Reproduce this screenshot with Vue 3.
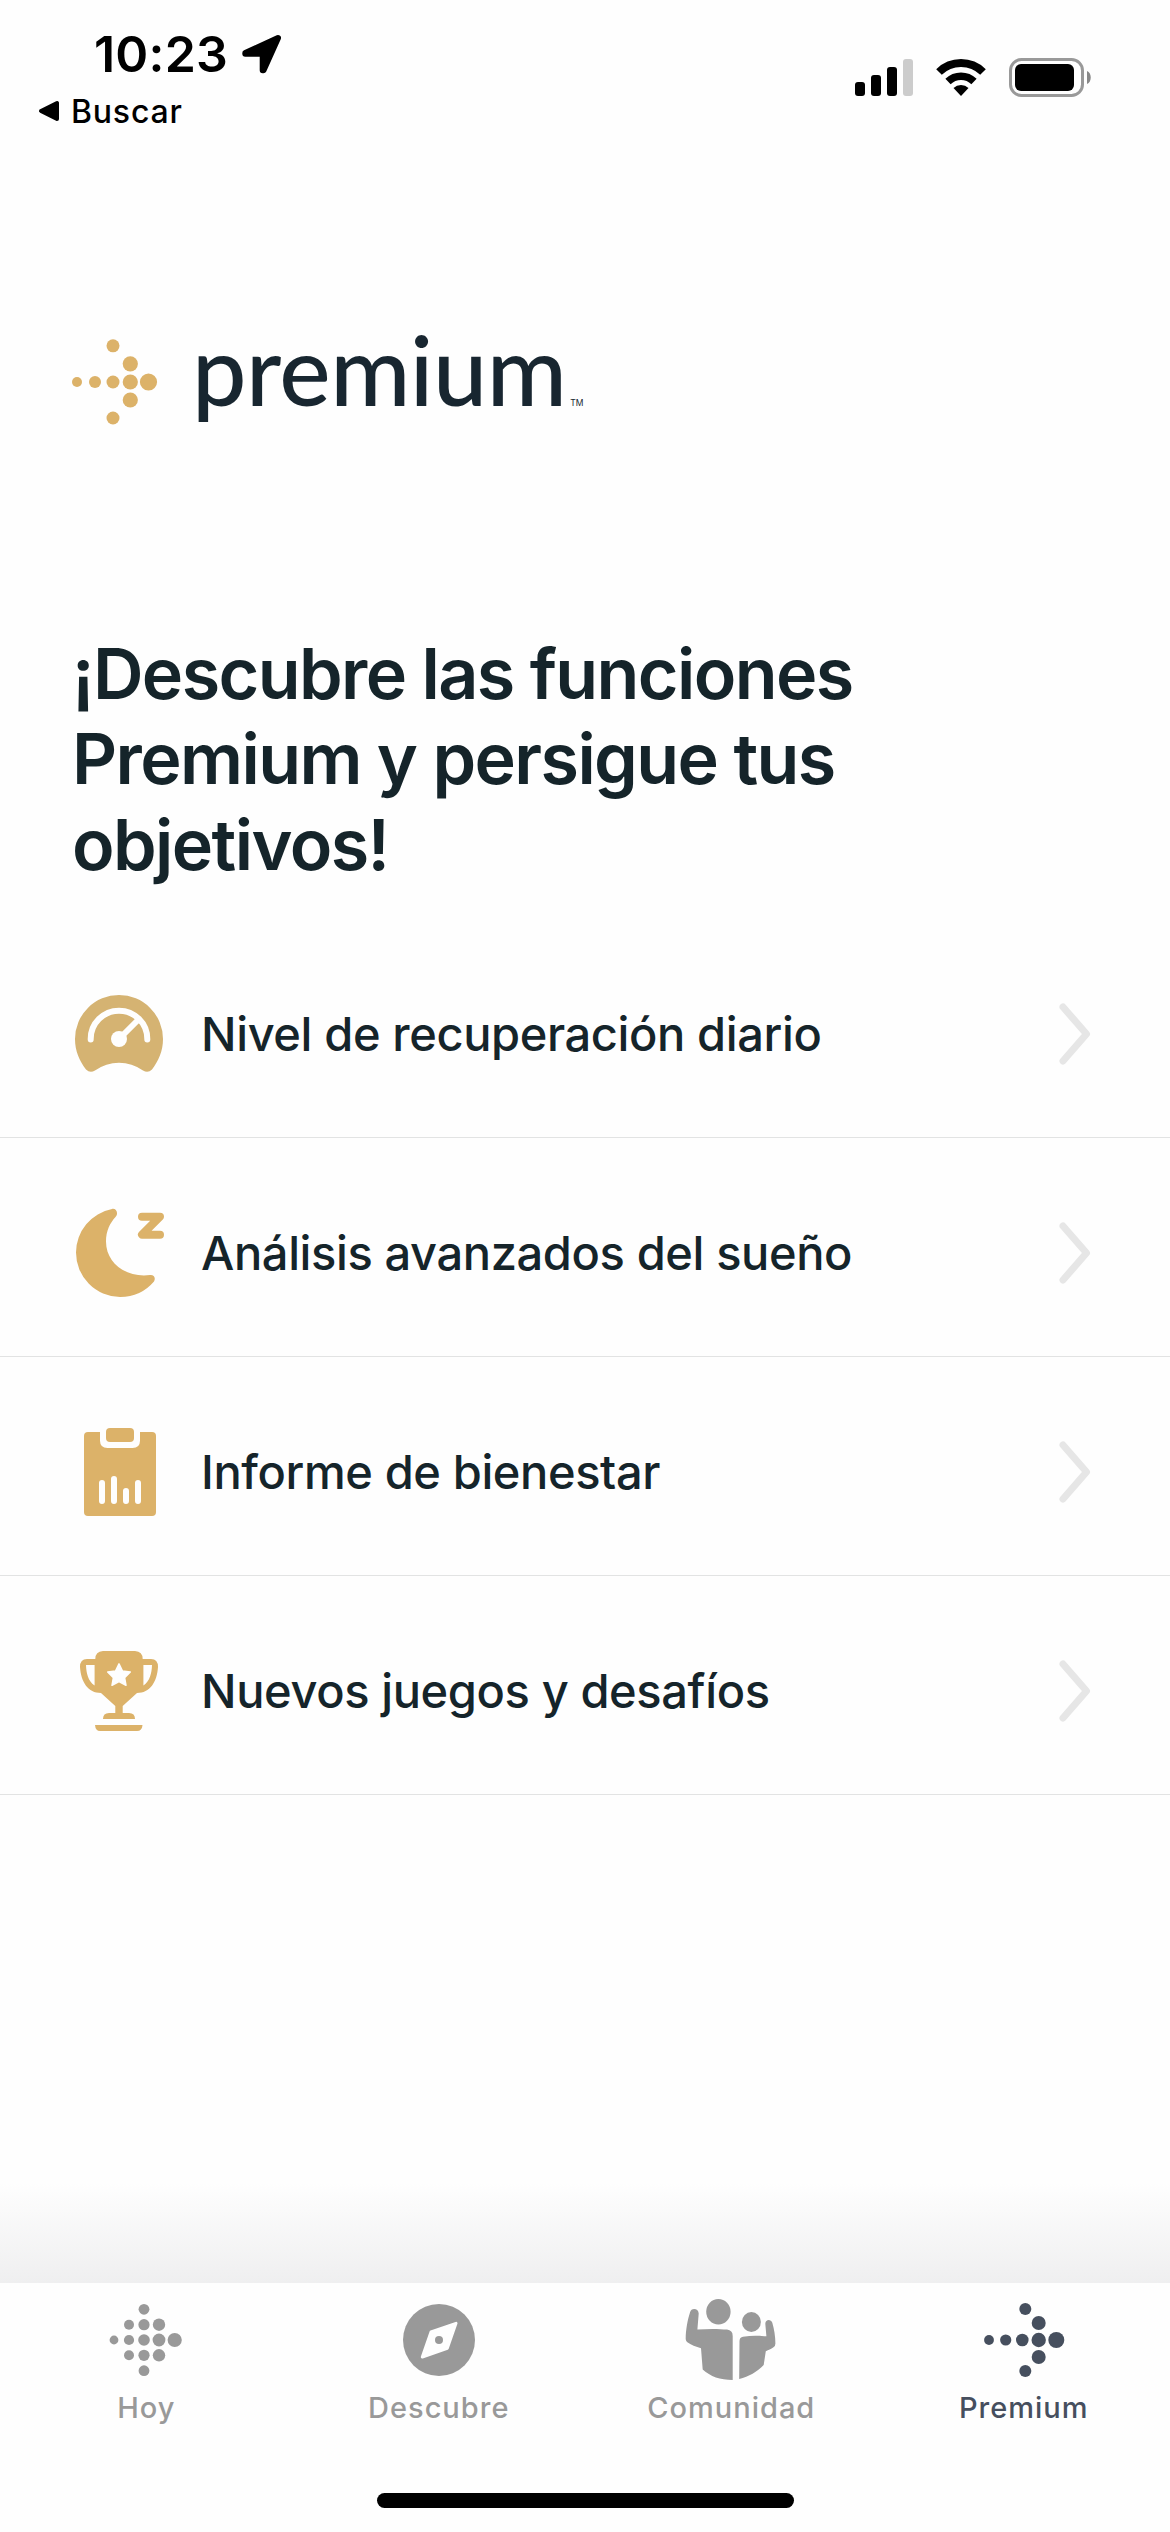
<script setup>
import { ref } from 'vue';

const activeTab = ref('premium');

const features = [
  { icon: 'gauge', label: 'Nivel de recuperación diario' },
  { icon: 'moon', label: 'Análisis avanzados del sueño' },
  { icon: 'report', label: 'Informe de bienestar' },
  { icon: 'trophy', label: 'Nuevos juegos y desafíos' },
];

const tabs = [
  { id: 'hoy', label: 'Hoy' },
  { id: 'descubre', label: 'Descubre' },
  { id: 'comunidad', label: 'Comunidad' },
  { id: 'premium', label: 'Premium' },
];

// [cx, cy, r]
const logoDots = [
  [7, 43, 5], [25, 43, 6], [43, 43, 6.5], [60.3, 43, 7.6], [78.5, 43, 8.6],
  [43, 6.8, 6.5], [60.3, 24.8, 7.6], [60.3, 61, 7.6], [43, 79, 6.5],
];

const todayDots = [
  [18, 50, 4.4],
  [33, 34.7, 5], [33, 50, 5.1], [33, 65.3, 5],
  [48, 19.3, 5.4], [48, 34.7, 5.6], [48, 50, 5.8], [48, 65.3, 5.6], [48, 80.7, 5.4],
  [63, 34.7, 6.2], [63, 50, 6.4], [63, 65.3, 6.2],
  [78.7, 50, 7.1],
];

const premiumDots = [
  [15, 50, 4.9], [31.7, 50, 5.6], [48.3, 50, 6.3], [64.7, 50, 7.2], [82.3, 50, 8],
  [51.3, 19, 6], [64.7, 33, 7], [64.7, 67, 7], [51.3, 81, 6],
];
</script>

<template>
  <div class="screen">
    <header class="status-bar">
      <div class="status-left">
        <div class="clock-row">
          <span class="clock">10:23</span>
          <svg class="location" viewBox="0 0 40 40">
            <path d="M37 4 L4.300 19 V19.700 H21.700 V36.300 H22.500 Z" fill="#000" stroke="#000" stroke-width="6" stroke-linejoin="round" />
          </svg>
        </div>
        <div class="back-row">
          <svg class="back-arrow" viewBox="0 0 22 22">
            <path d="M19 3 V19 L3 11 Z" fill="#000" stroke="#000" stroke-width="4" stroke-linejoin="round" />
          </svg>
          <span class="back-label">Buscar</span>
        </div>
      </div>
      <div class="status-right">
        <svg width="58" height="40" viewBox="0 0 58 40">
          <rect x="0" y="24" width="10" height="14" rx="3" />
          <rect x="16" y="17" width="10" height="21" rx="3" />
          <rect x="32" y="9" width="10" height="29" rx="3" />
          <rect x="48" y="1" width="10" height="37" rx="3" fill="#cccccc" />
        </svg>
        <svg width="52" height="40" viewBox="0 0 52 40">
          <path d="M4 14 A31.500 31.500 0 0 1 48 14" fill="none" stroke="#000" stroke-width="8" />
          <path d="M13 23.500 A18.500 18.500 0 0 1 39 23.500" fill="none" stroke="#000" stroke-width="7.500" />
          <path d="M18.500 30 A11 11 0 0 1 33.500 30 L26 38 Z" />
        </svg>
        <svg width="83" height="40" viewBox="0 0 83 40">
          <rect x="1.500" y="1.500" width="72" height="36" rx="11" fill="none" stroke="#999" stroke-width="3" />
          <rect x="6" y="6" width="59" height="27" rx="6" />
          <path d="M78 13 C83 15 83 24 78 26 Z" fill="#888" />
        </svg>
      </div>
    </header>

    <main class="content">
      <div class="brand">
        <svg class="brand-mark" viewBox="0 0 88 86">
          <circle v-for="(d, i) in logoDots" :key="i" :cx="d[0]" :cy="d[1]" :r="d[2]" />
        </svg>
        <span class="brand-name">premium</span>
        <span class="brand-tm">TM</span>
      </div>

      <h1 class="title">
        ¡Descubre las funciones<br />
        Premium y persigue tus<br />
        objetivos!
      </h1>

      <ul class="features">
        <li v-for="item in features" :key="item.label" class="feature">
          <svg class="feature-icon" :class="item.icon" viewBox="0 0 100 100">
            <g v-if="item.icon === 'gauge'">
              <path d="M5 55 A44 44 0 0 1 93 55 C93 67 88.500 77 82 85.500 Q78 89.500 73 86.500 Q62 78.700 49 78.700 Q36 78.700 25 86.500 Q20 89.500 16 85.500 C9.500 77 5 67 5 55 Z" />
              <path class="cut-line" d="M20.700 55.500 V55 A28.300 28.300 0 0 1 77.300 55 V55.500 M49 55 L68 36" />
              <circle class="cut" cx="49" cy="55" r="8" />
            </g>
            <g v-else-if="item.icon === 'moon'">
              <path d="M42 6 A44.500 44.500 0 0 0 6 49.500 A44.500 44.500 0 0 0 50 94 A44.500 44.500 0 0 0 84 78.500 C86 75 84 71.500 80 72 C56 75 36 60 36 38.500 C36 28 40 20 45.500 14 C49 10 46 5 42 6 Z" />
              <path class="zed" d="M72 13.700 H90 L72 31.700 H90" />
            </g>
            <g v-else-if="item.icon === 'report'">
              <rect x="14" y="10" width="72" height="84" rx="4" />
              <path class="cut" d="M30 8 H70 V18.500 Q70 26 62.500 26 H37.500 Q30 26 30 18.500 Z" />
              <rect x="36" y="6" width="28" height="14" rx="4" />
              <path class="cut-line" d="M32 61 V79 M44 57 V79 M56 69 V79 M68 61 V79" />
            </g>
            <g v-else>
              <path
                fill-rule="evenodd"
                d="M33 10 H65 Q72.700 10.500 72.700 18 H81 Q88 18 88 26 C87 41 80 52 67 52 L52.700 65 V72 H59 Q65 72 65 78 H33 Q33 72 39 72 H45.300 V65 L31 52 C18 52 11 41 10 26 Q10 18 17 18 H25.300 Q25.300 10.500 33 10 Z M16 24 C16.300 32 18 40 24.600 44.500 V24 Z M82 24 H73.400 V44.500 C80 40 81.700 32 82 24 Z"
              />
              <path d="M25 84 H72.500 Q72 90 67 90 H30 Q25.500 90 25 84 Z" />
              <path class="star" d="M49 22.800 L52.500 30 L60.300 31 L54.600 36.600 L56 44.300 L49 40.600 L42 44.300 L43.400 36.600 L37.700 31 L45.500 30 Z" />
            </g>
          </svg>
          <span class="feature-label">{{ item.label }}</span>
          <svg class="chevron" viewBox="0 0 34 64">
            <path d="M5 5 L28.500 32 L5 59" />
          </svg>
        </li>
      </ul>
    </main>

    <div class="fade"></div>

    <nav class="tab-bar">
      <button
        v-for="tab in tabs"
        :key="tab.id"
        class="tab"
        :class="{ active: activeTab === tab.id }"
        @click="activeTab = tab.id"
      >
        <svg class="tab-icon" viewBox="0 0 100 100">
          <g v-if="tab.id === 'hoy'">
            <circle v-for="(d, i) in todayDots" :key="i" :cx="d[0]" :cy="d[1]" :r="d[2]" />
          </g>
          <g v-else-if="tab.id === 'descubre'">
            <circle cx="50" cy="50" r="36" />
            <path class="needle" d="M67 33.300 L58.300 58.300 L33.300 67 L42 42 Z" />
            <circle cx="50" cy="50" r="4" />
          </g>
          <g v-else-if="tab.id === 'comunidad'">
            <ellipse cx="37.400" cy="21.700" rx="12.200" ry="12.700" />
            <ellipse cx="70.400" cy="32" rx="9.500" ry="10" />
            <path d="M9 22.500 C10 17.500 17.500 18 17.700 23.500 L16.400 39.500 C27 38.700 38 38.700 46 39.600 Q51.700 40.300 51.700 46 V90 C39 90 29.500 86.500 21.700 79.500 L20 58.300 C15 56.800 10 55 6 52 Q4.700 50.500 4.700 49 C4.700 40 6.500 30 9 22.500 Z" />
            <path d="M58.200 89 L58.500 51 Q58.700 47.400 62 46.800 C70 45.500 77 45.700 85.400 46.300 L84.300 33.800 C84.500 29 90 29 91.300 32.800 C93.200 39 94.400 47 94.400 53.500 Q94.400 56 92.500 57.300 C90 59 87.500 60.200 84.800 61.200 L82.700 75 C76 82 68 86.500 58.200 89 Z" />
          </g>
          <g v-else>
            <circle v-for="(d, i) in premiumDots" :key="i" :cx="d[0]" :cy="d[1]" :r="d[2]" />
          </g>
        </svg>
        <span class="tab-label">{{ tab.label }}</span>
      </button>
    </nav>
    <div class="home-area">
      <div class="home-indicator"></div>
    </div>
  </div>
</template>

<style>
body {
  background: #fefefe;
}
</style>

<style scoped>
.screen {
  width: 1170px;
  height: 2532px;
  display: flex;
  flex-direction: column;
  overflow: hidden;
  background: #fefefe;
  color: #15242a;
  font-family: 'Inter', 'Liberation Sans', sans-serif;
}

/* Status bar */
.status-bar {
  height: 150px;
  display: flex;
  justify-content: space-between;
  color: #000;
}
.status-left { padding: 24px 0 0 38px; }
.clock-row {
  display: flex;
  align-items: center;
  height: 60px;
  padding-left: 56px;
}
.clock { font-size: 50px; font-weight: 600; letter-spacing: 0.2px; width: 147px; }
.location { width: 40px; height: 40px; }
.back-row { display: flex; align-items: center; gap: 11px; height: 54px; }
.back-arrow { width: 22px; height: 22px; }
.back-label { font-size: 32px; font-weight: 500; letter-spacing: 0.8px; }
.status-right {
  display: flex;
  gap: 22px;
  padding: 58px 78px 0 0;
}

/* Logo */
.content { flex: 1; }
.brand {
  display: flex;
  height: 110px;
  padding: 189px 0 0 70px;
}
.brand-mark { width: 88px; height: 86px; fill: #dcb269; }
.brand-name {
  font-family: 'Lato', sans-serif;
  font-size: 97px;
  font-weight: 500;
  line-height: 110px;
  letter-spacing: -0.5px;
  color: #182630;
  margin-top: -25px;
  padding-left: 34px;
}
.brand-tm { font-size: 8.5px; line-height: 10px; padding: 59px 0 0 4px; color: #182630; }

.title {
  margin: 182px 0 0 72px;
  font-size: 70px;
  line-height: 85.3px;
  font-weight: 600;
  letter-spacing: -1.6px;
}

/* Feature list */
.features { list-style: none; margin: 32px 0 0; padding: 0; }
.feature {
  box-sizing: border-box;
  height: 219px;
  display: flex;
  align-items: center;
  padding: 12px 78px 0 70px;
  border-bottom: 1px solid #e2e3e3;
}
.feature-icon { width: 100px; height: 100px; fill: #dcb269; }
.feature-icon.gauge { fill: #d5b372; }
.feature-icon .cut { fill: #fefefe; }
.feature-icon .cut-line { fill: none; stroke: #fefefe; stroke-width: 6; stroke-linecap: round; }
.feature-icon .zed { fill: none; stroke: #dcb269; stroke-width: 8; stroke-linecap: round; stroke-linejoin: round; }
.feature-icon .star { fill: #fefefe; stroke: #fefefe; stroke-width: 1.5; stroke-linejoin: round; }
.feature-label {
  flex: 1;
  padding-left: 31px;
  font-size: 47px;
  font-weight: 500;
  letter-spacing: -0.38px;
}
.chevron { width: 34px; height: 64px; }
.chevron path { fill: none; stroke: #e6e6e6; stroke-width: 7; stroke-linecap: round; stroke-linejoin: round; }

.fade { height: 100px; background: linear-gradient(to bottom, #fefefe, #efeff0); }

/* Tab bar */
.tab-bar { display: flex; height: 176px; background: #fefefe; }
.tab {
  flex: 1;
  display: flex;
  flex-direction: column;
  align-items: center;
  padding: 7px 0 0;
  border: none;
  background: none;
  font-family: inherit;
  color: #999;
}
.tab.active { color: #464f5e; }
.tab-icon { width: 100px; height: 100px; fill: currentColor; }
.tab-icon .needle { fill: #fefefe; stroke: #fefefe; stroke-width: 3; stroke-linejoin: round; }
.tab-label { font-size: 29px; line-height: 36px; font-weight: 500; letter-spacing: 1px; }
.home-area {
  display: flex;
  justify-content: center;
  height: 39px;
  padding-top: 34px;
}
.home-indicator { width: 417px; height: 15px; border-radius: 8px; background: #000; }
</style>
